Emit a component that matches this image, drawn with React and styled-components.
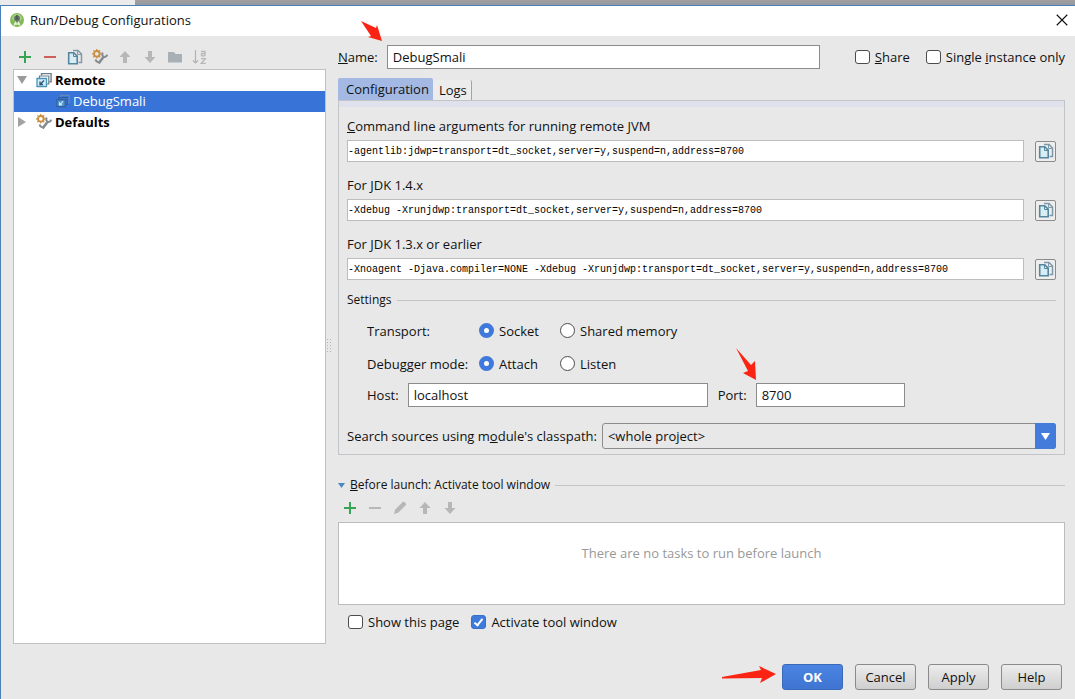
import React from "react";
import styled, { createGlobalStyle } from "styled-components";

const Global = createGlobalStyle`
  *, *::before, *::after { box-sizing: border-box; }
  body {
    margin: 0;
    background: #e8e8e8;
    color: #111;
    font: 13px/20px "Open Sans", "Noto Sans", sans-serif;
  }
  input, button, select { font: inherit; color: inherit; margin: 0; }
`;

const Screen = styled.div`
  display: flex;
  flex-direction: column;
  min-height: 100vh;
`;

const Backdrop = styled.div`
  display: flex;
  height: 5px;
  background: linear-gradient(#a39e9b, #929aa4);
`;

const BackdropPane = styled.div`
  width: 135px;
  background: #ebebeb;
`;

const Dialog = styled.main`
  flex: 1;
  display: flex;
  flex-direction: column;
  border: solid #4a80b8;
  border-width: 1px 0 0 1px;
  background: #e8e8e8;
`;

const TitleBar = styled.header`
  display: flex;
  align-items: center;
  gap: 5px;
  height: 30px;
  padding: 0 6px 2px 8px;
  background: #fff;
`;

const Title = styled.h1`
  flex: 1;
  margin: 0;
  font-size: 13px;
  font-weight: 400;
`;

const IconButton = styled.button`
  display: grid;
  place-items: center;
  padding: 0 1px 0 0;
  border: 0;
  width: ${(p) => p.$size || 25}px;
  height: 20px;
  background: none;
`;

const Body = styled.div`
  flex: 1;
  display: grid;
  grid-template-columns: 313px 12px minmax(0, 1fr);
  padding: 9px 10px 0 12px;
`;

const Column = styled.section`
  display: flex;
  flex-direction: column;
  min-width: 0;
`;

const Toolbar = styled.div`
  display: flex;
  align-items: center;
  height: ${(p) => p.$height}px;
  padding-bottom: 1px;
`;

const Tree = styled.ul`
  flex: 1;
  margin: 0;
  padding: 0;
  list-style: none;
  border: 1px solid #c0c0c0;
  background: #fff;
`;

const TreeRow = styled.li`
  display: flex;
  align-items: center;
  gap: 3px;
  height: 21px;
  padding: 0 0 1px ${(p) => (p.$child ? 42 : 2)}px;
  font-weight: ${(p) => (p.$child ? 400 : 700)};
  color: ${(p) => (p.$child ? "#fff" : "#000")};
  background: ${(p) => (p.$child ? "#3874d8" : "transparent")};
`;

const Twisty = styled.svg`
  margin-right: 6px;
`;

const Splitter = styled.div`
  align-self: center;
  width: 6px;
  height: 14px;
  background: radial-gradient(circle, #b4b4b4 1px, transparent 1px) 0 0 / 3px 3px;
`;

const NameRow = styled.div`
  display: flex;
  align-items: center;
  height: 24px;
`;

const NameBox = styled.div`
  position: relative;
  flex: 1;
  display: flex;
  margin: 0 35px 0 9px;
`;

const TextInput = styled.input`
  width: 100%;
  height: 24px;
  padding: 0 5px 1px;
  border: 1px solid #8c8c8c;
  border-radius: 0;
  background: #fff;
`;

const Option = styled.label`
  display: flex;
  align-items: center;
  gap: 5px;
  white-space: nowrap;
`;

const Options = styled.div`
  display: flex;
  gap: 16px;
`;

const CheckInput = styled.input.attrs({ type: "checkbox" })`
  appearance: none;
  display: grid;
  place-items: center;
  width: 15px;
  height: 14px;
  border: 1px solid #4c4c4c;
  border-radius: 3px;
  background: #fff;
  &:checked { background: #3f7bdc; border-color: #3a6fc8; }
  &:checked::after {
    content: "";
    width: 5px;
    height: 9px;
    margin-bottom: 2px;
    border: solid #fff;
    border-width: 0 2px 2px 0;
    transform: rotate(38deg);
  }
`;

const RadioInput = styled.input.attrs({ type: "radio" })`
  appearance: none;
  width: 15px;
  height: 15px;
  border: 1px solid #4c4c4c;
  border-radius: 50%;
  background: #fff;
  &:checked { border: 5px solid #3f79dc; }
`;

const Tabs = styled.div`
  display: flex;
  align-items: flex-end;
  margin-top: 9px;
`;

const Tab = styled.button`
  height: ${(p) => (p.$active ? 22 : 20)}px;
  padding: 0 4px 0 ${(p) => (p.$active ? 8 : 6)}px;
  border: 0 solid #a4a4a4;
  border-width: ${(p) => (p.$active ? "0" : "0 1px 0 0")};
  border-radius: 2px 2px 0 0;
  background: ${(p) => (p.$active ? "#a3b9e3" : "#ececec")};
`;

const Panel = styled.div`
  display: flex;
  flex-direction: column;
  padding: 8px 8px 5px;
  border: 1px solid #c2c4c8;
  background: linear-gradient(#dfe2ec 6px, #e8e8e8 6px);
`;

const PanelLabel = styled.label`
  margin-top: 7px;
`;

const CommandRow = styled.div`
  display: flex;
  align-items: center;
  gap: 11px;
  margin: 4px 0 6px;
`;

const CommandInput = styled.input`
  flex: 1;
  min-width: 0;
  height: 22px;
  padding: 0;
  border: 1px solid #bdbdbd;
  background: #fff;
  && { font: 10px/20px "Liberation Mono", monospace; color: #000; }
`;

const CopyButton = styled.button`
  display: grid;
  place-items: center;
  width: 21px;
  height: 21px;
  padding: 0;
  border: 1px solid #8b8b8b;
  border-radius: 2px;
  background: #eee;
`;

const Heading = styled.h2`
  display: flex;
  align-items: center;
  gap: 5px;
  margin: ${(p) => p.$top || 0}px 0 0;
  font-size: 12px;
  font-weight: 400;
  line-height: 20px;
  &::after { content: ""; flex: 1; border-top: 1px solid #c4c4c4; }
`;

const SettingRow = styled.div`
  display: grid;
  grid-template-columns: 112px 81px auto;
  justify-content: start;
  align-items: center;
  height: 33px;
  padding-left: 20px;
`;

const Settings = styled.div`
  display: flex;
  flex-direction: column;
  padding-top: 4px;
`;

const HostRow = styled.div`
  display: flex;
  align-items: center;
  height: 24px;
  margin-top: 3px;
  padding-left: 20px;
`;

const Field = styled.div`
  position: relative;
  display: flex;
  flex: 0 1 ${(p) => p.$width}px;
  margin: 0 10px 0 9px;
`;

const SourceRow = styled.div`
  display: flex;
  align-items: center;
  gap: 5px;
  margin-top: 16px;
`;

const SelectBox = styled.div`
  position: relative;
  flex: 1;
  display: flex;
`;

const Select = styled.select`
  appearance: none;
  width: 100%;
  height: 26px;
  padding: 0 26px 0 5px;
  border: 1px solid #8c8c8c;
  border-radius: 3px;
  background: #e8e8e8;
`;

const SelectArrow = styled.span`
  position: absolute;
  inset: 0 0 0 auto;
  display: grid;
  place-items: center;
  width: 21px;
  border-radius: 0 3px 3px 0;
  background: #437cdb;
  pointer-events: none;
`;

const BeforeLaunch = styled.div`
  display: flex;
  flex-direction: column;
`;

const TaskList = styled.div`
  display: flex;
  justify-content: center;
  height: 83px;
  padding-top: 20px;
  border: 1px solid #bcbcbc;
  background: #fff;
  color: #999;
`;

const LaunchOptions = styled.div`
  display: flex;
  gap: 12px;
  padding: 7px 0 11px 10px;
`;

const Footer = styled.footer`
  display: flex;
  justify-content: flex-end;
  gap: 12px;
  padding: 20px 13px 9px;
`;

const ActionButton = styled.button`
  position: relative;
  width: 61px;
  height: 26px;
  padding: 0;
  border: 1px solid ${(p) => (p.$primary ? "#3a69b8" : "#8a8a8a")};
  border-radius: 3px;
  font-weight: ${(p) => (p.$primary ? 700 : 400)};
  color: ${(p) => (p.$primary ? "#fff" : "#111")};
  background: ${(p) => (p.$primary ? "linear-gradient(#4a84e2, #3f74d2)" : "linear-gradient(#ececec, #cfcfcf)")};
`;

const Pointer = styled.svg`
  position: absolute;
  right: 100%;
  bottom: ${(p) => p.$bottom}px;
  margin-right: ${(p) => p.$gap || 0}px;
  pointer-events: none;
  fill: #fb2413;
`;

const Svg = ({ children, size = 16 }) => (
  <svg width={size} height={size} viewBox="0 0 16 16" fill="none" aria-hidden="true">{children}</svg>
);

const PlusIcon = () => <Svg><path d="M8 2v12M2 8h12" stroke="#36a553" strokeWidth="2" /></Svg>;
const MinusIcon = ({ color }) => <Svg><path d="M2 8h12" stroke={color} strokeWidth="2" /></Svg>;
const CopyIcon = () => (
  <Svg>
    <path d="M6 1.500h5l3.500 3.500v8.500h-3" stroke="#7f99a8" strokeWidth="1.500" />
    <path d="M10.500 1.500v4h4" stroke="#7f99a8" />
    <path d="M1.700 3.700h5l3.500 3.500v7.500H1.700z" fill="#d9edf5" stroke="#55869f" strokeWidth="1.600" />
    <path d="M6.500 4v3.500h3.500" stroke="#55869f" />
  </Svg>
);
const ToolsIcon = () => (
  <Svg>
    <path d="M6.500 14.500 11.500 8" stroke="#858b8e" strokeWidth="2.600" />
    <path d="M10.800 3.500c-1.200 2-.3 4.300 1.700 4.500 1.500.1 2.400-.9 2.600-2.300" stroke="#858b8e" strokeWidth="2" />
    <path d="M3.500 10.500c.5 2 1.500 2.500 3 2.500" stroke="#858b8e" strokeWidth="1.800" />
    <circle cx="4.800" cy="4.800" r="2.800" stroke="#c99042" strokeWidth="1.900" />
    <path d="M4.800 0v2M4.800 7.600v2M0 4.800h2M7.600 4.800h2M1.400 1.400l1.400 1.400M6.800 6.800l1.400 1.400M8.200 1.400 6.800 2.800M2.800 6.800 1.400 8.200" stroke="#c99042" strokeWidth="1.300" />
  </Svg>
);
const UpIcon = () => <Svg><path d="M8 2l5.500 6h-3.500v6H6V8H2.500z" fill="#b7b7b7" /></Svg>;
const DownIcon = () => <Svg><path d="M8 14l5.500-6h-3.500V2H6v6H2.500z" fill="#b7b7b7" /></Svg>;
const FolderIcon = () => <Svg><path d="M1 3h6l1.500 2H15v8.500H1z" fill="#a9b0b5" /></Svg>;
const SortIcon = () => (
  <Svg>
    <path d="M3.500 1v13M1 11.500l2.500 2.500L6 11.500" stroke="#b3b3b3" strokeWidth="1.200" />
    <path d="M9 2.500h4v4.500M13 4.600H9.500v2.200H13M9 9.700h4.300L9.300 14.300h4.500" stroke="#b7b7b7" strokeWidth="1.300" />
  </Svg>
);
const PencilIcon = () => <Svg><path d="M2 14l1.200-4.500 7.500-7.500c1.200-1 4.300 1.700 3 3.200L6.200 12.700z" fill="#b7b7b7" /></Svg>;
const RemoteIcon = ({ dim }) => (
  <Svg size={dim ? 14 : 16}>
    <path d="M5.500 3.500V1.600h9.600v8.300h-2" stroke={dim ? "#6487b4" : "#6b7f8c"} strokeWidth="1.400" />
    <path d="M3.500 6V4h9.300v8h-2" stroke={dim ? "#2f5c94" : "#6b7f8c"} strokeWidth="1.200" />
    <path d="M1 6.500h9.500v8H1z" fill={dim ? "#4d92d2" : "#d5edf8"} stroke={dim ? "#2f5f9a" : "#4a92b8"} strokeWidth="1.300" />
    <path d="M8 8.500 4.500 12M4 9.500v3h3" stroke={dim ? "#cfe8f5" : "#2a5878"} strokeWidth="1.300" />
  </Svg>
);
const AppIcon = () => (
  <Svg>
    <circle cx="8" cy="8" r="7" fill="#82b955" />
    <path d="M3 7a5 5 0 0110 0l-2 2H5z" fill="#a9cf8a" />
    <circle cx="8" cy="6.500" r="3" fill="#637064" />
    <path d="M8 8l-3 5.500M8 8l3 5.500M5 12h6" stroke="#e8f1e0" strokeWidth="1.300" />
    <path d="M8 3v7" stroke="#48564b" strokeWidth="1.500" />
  </Svg>
);
const CloseIcon = () => <Svg size={14}><path d="M2 2l12 12M14 2L2 14" stroke="#111" strokeWidth="1.300" /></Svg>;

const commands = [
  { id: "cmd", label: <span><u>C</u>ommand line arguments for running remote JVM</span>, value: "-agentlib:jdwp=transport=dt_socket,server=y,suspend=n,address=8700" },
  { id: "jdk14", label: "For JDK 1.4.x", value: "-Xdebug -Xrunjdwp:transport=dt_socket,server=y,suspend=n,address=8700" },
  { id: "jdk13", label: "For JDK 1.3.x or earlier", value: "-Xnoagent -Djava.compiler=NONE -Xdebug -Xrunjdwp:transport=dt_socket,server=y,suspend=n,address=8700" },
];

const treeTools = [
  ["Add", <PlusIcon />], ["Remove", <MinusIcon color="#cc5f58" />], ["Copy", <CopyIcon />], ["Edit defaults", <ToolsIcon />],
  ["Move up", <UpIcon />], ["Move down", <DownIcon />], ["New folder", <FolderIcon />], ["Sort", <SortIcon />],
];

const taskTools = [
  ["Add task", <PlusIcon />], ["Remove task", <MinusIcon color="#b7b7b7" />], ["Edit task", <PencilIcon />],
  ["Move task up", <UpIcon />], ["Move task down", <DownIcon />],
];

const Tools = ({ items, height }) => (
  <Toolbar $height={height}>
    {items.map(([name, icon]) => <IconButton key={name} aria-label={name}>{icon}</IconButton>)}
  </Toolbar>
);

const Check = ({ children, ...rest }) => <Option><CheckInput {...rest} /><span>{children}</span></Option>;
const Radio = ({ children, ...rest }) => <Option><RadioInput {...rest} /><span>{children}</span></Option>;

export default function App() {
  return (
    <Screen>
      <Global />
      <Backdrop><BackdropPane /></Backdrop>
      <Dialog>
        <TitleBar>
          <AppIcon />
          <Title>Run/Debug Configurations</Title>
          <IconButton $size={14} aria-label="Close"><CloseIcon /></IconButton>
        </TitleBar>
        <Body>
          <Column>
            <Tools items={treeTools} height={24} />
            <Tree>
              <TreeRow>
                <Twisty width="11" height="10"><path d="M1 1h10L6 9z" fill="#9a9a9a" /></Twisty>
                <RemoteIcon />
                Remote
              </TreeRow>
              <TreeRow $child>
                <RemoteIcon dim />
                DebugSmali
              </TreeRow>
              <TreeRow>
                <Twisty width="11" height="10"><path d="M2 0v10l8-5z" fill="#a2a2a2" /></Twisty>
                <ToolsIcon />
                Defaults
              </TreeRow>
            </Tree>
          </Column>
          <Splitter />
          <Column>
            <NameRow>
              <label htmlFor="name"><u>N</u>ame:</label>
              <NameBox>
                <TextInput id="name" defaultValue="DebugSmali" />
                <Pointer $bottom={28} $gap={5} width="21" height="20" viewBox="0 0 21 20">
                  <path d="M0 0 15 7l1-3 5 16-14-4 3-1z" />
                </Pointer>
              </NameBox>
              <Options>
                <Check><u>S</u>hare</Check>
                <Check>Single <u>i</u>nstance only</Check>
              </Options>
            </NameRow>
            <Tabs>
              <Tab $active>Configuration</Tab>
              <Tab>Logs</Tab>
            </Tabs>
            <Panel>
              {commands.map((c) => (
                <React.Fragment key={c.id}>
                  <PanelLabel htmlFor={c.id}>{c.label}</PanelLabel>
                  <CommandRow>
                    <CommandInput id={c.id} readOnly value={c.value} />
                    <CopyButton aria-label="Copy to clipboard"><CopyIcon /></CopyButton>
                  </CommandRow>
                </React.Fragment>
              ))}
              <Heading $top={4}>Settings</Heading>
              <Settings>
                <SettingRow>
                  <span>Transport:</span>
                  <Radio name="transport" defaultChecked>Socket</Radio>
                  <Radio name="transport">Shared memory</Radio>
                </SettingRow>
                <SettingRow>
                  <span>Debugger mode:</span>
                  <Radio name="mode" defaultChecked>Attach</Radio>
                  <Radio name="mode">Listen</Radio>
                </SettingRow>
                <HostRow>
                  <label htmlFor="host">Host:</label>
                  <Field $width={300}><TextInput id="host" defaultValue="localhost" /></Field>
                  <label htmlFor="port">Port:</label>
                  <Field $width={149}>
                    <TextInput id="port" defaultValue="8700" />
                    <Pointer $bottom={27} width="20" height="32" viewBox="0 0 20 32">
                      <path d="M0 0 15 17l4-4 1 19L7 25l5-2z" />
                    </Pointer>
                  </Field>
                </HostRow>
                <SourceRow>
                  <label htmlFor="source">Search sources using m<u>o</u>dule's classpath:</label>
                  <SelectBox>
                    <Select id="source"><option>&lt;whole project&gt;</option></Select>
                    <SelectArrow><svg width="9" height="7"><path d="M0 0h9L4.500 7z" fill="#fff" /></svg></SelectArrow>
                  </SelectBox>
                </SourceRow>
              </Settings>
            </Panel>
            <BeforeLaunch>
              <Heading $top={20}>
                <svg width="7" height="5"><path d="M0 0h7L3.500 5z" fill="#4a88c0" /></svg>
                <span><u>B</u>efore launch: Activate tool window</span>
              </Heading>
              <Tools items={taskTools} height={27} />
              <TaskList>There are no tasks to run before launch</TaskList>
              <LaunchOptions>
                <Check>Show this page</Check>
                <Check defaultChecked>Activate tool window</Check>
              </LaunchOptions>
            </BeforeLaunch>
          </Column>
        </Body>
        <Footer>
          <ActionButton $primary>
            OK
            <Pointer $bottom={6} $gap={7} width="54" height="17" viewBox="0 0 54 17">
              <path d="M0 11 39 4l-2-4 17 8-16 9 2-5L0 12.500z" />
            </Pointer>
          </ActionButton>
          <ActionButton>Cancel</ActionButton>
          <ActionButton>Apply</ActionButton>
          <ActionButton>Help</ActionButton>
        </Footer>
      </Dialog>
    </Screen>
  );
}
